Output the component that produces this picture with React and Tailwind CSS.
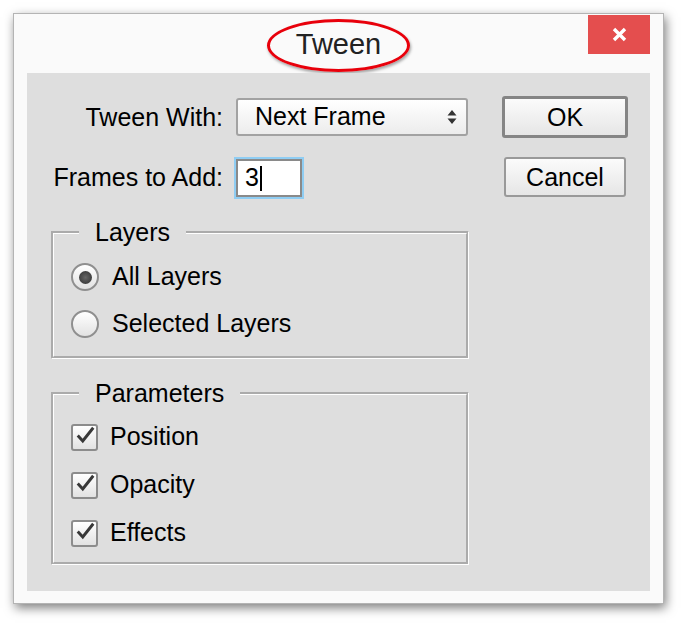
import React, { useState } from "react";

function Radio({ checked, label, onClick }) {
    return (
        <div onClick={onClick} className="flex items-center h-[40px] cursor-default">
            <span className="w-[28px] h-[28px] rounded-full border-2 border-[#8f8f8f] bg-linear-to-b from-white to-[#e2e2e2] flex items-center justify-center">
                {checked && <span className="w-[13px] h-[13px] rounded-full bg-radial from-[#666] to-[#2f2f2f]" />}
            </span>
            <span className="ml-[13px]">{label}</span>
        </div>
    );
}

function CheckBox({ label }) {
    return (
        <div className="flex items-center h-[40px]">
            <span className="w-[27px] h-[27px] rounded-[3px] border-2 border-[#8c8c8c] bg-linear-to-b from-white to-[#e2e2e2] flex items-center justify-center">
                <svg width="23" height="23" viewBox="0 0 23 23" className="-mt-[4px] ml-[2px]">
                    <path d="M3 11.5 L8.5 17.5 L20 3" fill="none" stroke="#383838" strokeWidth="3.2" />
                </svg>
            </span>
            <span className="ml-[12px]">{label}</span>
        </div>
    );
}

function Group({ title, children, className }) {
    return (
        <fieldset className={"ml-[24px] w-[418px] border-[3px] [border-style:groove] border-white pl-[17px] " + className}>
            <legend className="ml-[8px] px-[16px] leading-[29px]">{title}</legend>
            {children}
        </fieldset>
    );
}

export default function App() {
    const [allLayers, setAllLayers] = useState(true);

    return (
        <div className="w-[686px] h-[626px] bg-white p-[13px] font-['Liberation_Sans',Arial,sans-serif] text-[25px] text-black">
            <div className="w-[651px] h-[591px] bg-[#fafafa] border border-[#b4b4b4] shadow-[2px_4px_10px_rgba(0,0,0,0.5)] flex flex-col px-[13px] pb-[12px]">
                {/* title bar */}
                <div className="h-[59px] grid grid-cols-[1fr_auto_1fr]">
                    <div />
                    <div className="pt-[5px]">
                        <div className="w-[143px] h-[53px] rounded-[50%] border-[3px] border-[#e8000b] shadow-[1px_2px_3px_rgba(0,0,0,0.35)] flex items-center justify-center">
                            <span className="text-[29px] text-[#222] leading-none -mt-[2px]">Tween</span>
                        </div>
                    </div>
                    <div className="flex justify-end">
                        <div className="mt-px w-[62px] h-[39px] bg-[#e44e4e] flex items-center justify-center">
                            <svg width="15" height="15" viewBox="0 0 15 15">
                                <path d="M2 2 L13 13 M13 2 L2 13" stroke="#fff" strokeWidth="3.4" />
                            </svg>
                        </div>
                    </div>
                </div>

                {/* body */}
                <div className="flex-1 bg-[#dedede] pt-[23px]">
                    <div className="flex items-center h-[42px]">
                        <span className="w-[196px] text-right mt-[2px]">Tween With:</span>
                        <div className="ml-[13px] w-[232px] h-[38px] rounded-[3px] border-2 border-[#a2a2a2] bg-linear-to-b from-white to-[#ececec] flex items-center pl-[17px] pr-[9px]">
                            <span className="flex-1">Next Frame</span>
                            <svg width="10" height="16" viewBox="0 0 10 16">
                                <path d="M5 1 L9.5 6.5 H0.5 Z M0.5 9.5 H9.5 L5 15 Z" fill="#333" />
                            </svg>
                        </div>
                        <button className="ml-[34px] w-[126px] h-[42px] rounded-[3px] border-[3px] border-[#858585] bg-linear-to-b from-[#fbfbfb] to-[#e6e6e6]">
                            OK
                        </button>
                    </div>

                    <div className="flex items-start h-[42px] mt-[19px]">
                        <span className="w-[196px] text-right mt-[2px]">Frames to Add:</span>
                        <div className="ml-[11px] w-[70px] h-[42px] border-2 border-[#8fcdf3] bg-[#8fcdf3]">
                            <div className="h-full border-2 border-[#8a8a8a] bg-white flex items-center pl-[7px]">
                                <span>3</span>
                                <span className="w-[2px] h-[25px] bg-black ml-px" />
                            </div>
                        </div>
                        <button className="ml-[200px] w-[122px] h-[40px] rounded-[3px] border-2 border-[#999] bg-linear-to-b from-[#fbfbfb] to-[#e6e6e6]">
                            Cancel
                        </button>
                    </div>

                    <Group title="Layers" className="mt-[19px] pb-[12px]">
                        <div className="mt-[10px] flex flex-col gap-[7px]">
                            <Radio checked={allLayers} label="All Layers" onClick={() => setAllLayers(true)} />
                            <Radio checked={!allLayers} label="Selected Layers" onClick={() => setAllLayers(false)} />
                        </div>
                    </Group>

                    <Group title="Parameters" className="mt-[20px] pb-[9px]">
                        <div className="mt-[9px] flex flex-col gap-[8px]">
                            <CheckBox label="Position" />
                            <CheckBox label="Opacity" />
                            <CheckBox label="Effects" />
                        </div>
                    </Group>
                </div>
            </div>
        </div>
    );
}
